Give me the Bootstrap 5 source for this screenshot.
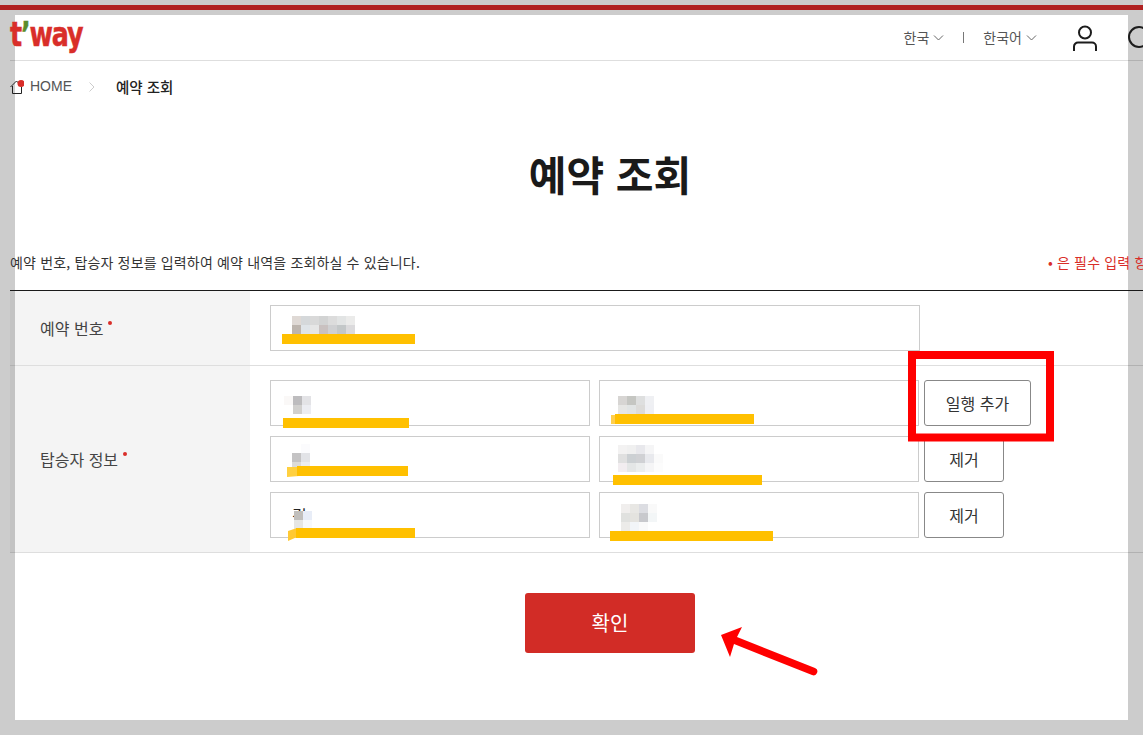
<!DOCTYPE html>
<html lang="ko">
  <head>
    <meta charset="UTF-8" />
    <meta name="viewport" content="width=device-width, initial-scale=1" />
    <title>예약 조회</title>
    <link href="https://cdn.jsdelivr.net/npm/bootstrap@5.3.3/dist/css/bootstrap.min.css" rel="stylesheet" />
    <style>
      html, body { height: 735px; overflow: hidden; }
      body {
        background-color: #cccccc;
        font-family: "Noto Sans CJK KR", "Liberation Sans", sans-serif;
        color: #222;
      }
      .top-rule { height: 5px; margin-top: 5px; background-color: #b02222; }
      .sheet { height: 705px; margin: 5px 15px 0; background-color: #fff; }
      .sheet-inner { width: 1200px; margin-left: -5px; }

      /* header */
      .site-head { height: 46px; width: 1143px; border-bottom: 1px solid rgba(0, 0, 0, .13); }
      .logo-text {
        font-family: "DejaVu Sans", sans-serif; font-weight: 700; font-size: 33px;
        letter-spacing: -1.5px; color: #d92e29; line-height: 1; margin-top: -6px;
        transform: scaleX(.77); transform-origin: left center;
        -webkit-text-stroke: .5px #d92e29;
      }
      .logo-text span { color: #5b8c2a; -webkit-text-stroke: .5px #5b8c2a; }
      .lang-item { font-size: 14px; color: #555; }
      .lang-sep { width: 1px; height: 11px; background-color: #777; margin: 0 19px; }
      .user-ico { margin-left: 36px; margin-right: 30px; }

      /* breadcrumb */
      .crumbs { height: 51px; font-size: 14px; }
      .crumb-home { color: #555; font-family: "Liberation Sans", sans-serif; margin-left: 6px; }
      .crumb-now { font-weight: 500; font-size: 14.5px; color: #222; }
      .crumb-gap { margin: 0 21px 0 17px; }

      .page-title { font-size: 41px; font-weight: 700; color: #1a1a1a; line-height: 56px; margin: 33px 0 0; }
      .intro { height: 38px; margin-top: 51px; font-size: 14px; letter-spacing: .16px; color: #333; }
      .intro-text { width: 1038px; }
      .intro-req { color: #d92e29; white-space: nowrap; }

      /* form table */
      .form-tbl { border-top: 1px solid #1a1a1a; }
      .form-line { border-bottom: 1px solid rgba(0, 0, 0, .13); }
      .form-key {
        width: 240px; padding-left: 30px; font-size: 16px; color: #444;
        background-color: rgba(0, 0, 0, .045);
      }
      .req-dot {
        width: 4px; height: 4px; border-radius: 50%; background-color: #d92e29;
        margin-left: 5px; margin-top: -10px;
      }
      .form-val { padding: 14px 0 14px 20px; row-gap: 10px; }
      .pax-line { gap: 9px; }
      .field-one { width: 650px; }
      .field-half { width: 320px; }
      .form-control.field-box {
        height: 46px; border: 1px solid #ccc; border-radius: 0; font-size: 16px;
        padding: 0 21px; color: #222; box-shadow: none;
      }
      .btn.line-btn {
        height: 46px; margin-left: -4px; padding: 0; border: 1px solid #888; border-radius: 3px;
        font-size: 16px; color: #333; background-color: #fff;
      }
      .line-btn-add { width: 107px; }
      .line-btn-del { width: 80px; }

      .btn.ok-btn {
        width: 170px; height: 60px; margin-top: 40px; padding: 0; border: 0; border-radius: 3px;
        background-color: #d22c26; color: #fff; font-size: 20px;
      }

      .marks { position: absolute; top: 0; left: 0; pointer-events: none; }
    </style>
  </head>
  <body>
    <div class="top-rule"></div>
    <div class="sheet">
      <div class="sheet-inner">

        <!-- Header -->
        <div class="site-head d-flex align-items-center justify-content-between">
          <div class="logo-text">t<span>’</span>way</div>
          <div class="d-flex align-items-center">
            <span class="lang-item d-flex align-items-center gap-1">한국
              <svg width="11" height="6" viewBox="0 0 11 6"><path d="M1 .5l4.500 4.500L10 .5" fill="none" stroke="#666" /></svg>
            </span>
            <span class="lang-sep"></span>
            <span class="lang-item d-flex align-items-center gap-1">한국어
              <svg width="11" height="6" viewBox="0 0 11 6"><path d="M1 .5l4.500 4.500L10 .5" fill="none" stroke="#666" /></svg>
            </span>
            <svg class="user-ico" width="24" height="26" viewBox="0 0 24 26">
              <circle cx="12" cy="7.500" r="6" fill="none" stroke="#1c1c1c" stroke-width="2" />
              <path d="M1 26v-4.500a4 4 0 0 1 4-4h14a4 4 0 0 1 4 4V26" fill="none" stroke="#1c1c1c" stroke-width="2" />
            </svg>
            <svg width="26" height="26" viewBox="0 0 26 26">
              <circle cx="12" cy="12" r="10" fill="none" stroke="#1c1c1c" stroke-width="2" />
              <path d="M19 19l6 6" stroke="#1c1c1c" stroke-width="2" />
            </svg>
          </div>
        </div>

        <!-- Breadcrumb -->
        <div class="crumbs d-flex align-items-center">
          <svg width="14" height="14" viewBox="0 0 14 14">
            <path d="M.5 7L6.500 1l4 4M2.500 6v7.500h9V7" fill="none" stroke="#222" />
            <circle cx="11" cy="3.500" r="3.500" fill="#d92e29" />
          </svg>
          <span class="crumb-home">HOME</span>
          <svg class="crumb-gap" width="6" height="10" viewBox="0 0 6 10"><path d="M.5.5L5 5 .5 9.500" fill="none" stroke="#ccc" /></svg>
          <span class="crumb-now">예약 조회</span>
        </div>

        <h1 class="page-title text-center">예약 조회</h1>

        <div class="intro d-flex align-items-start">
          <span class="intro-text">예약 번호, 탑승자 정보를 입력하여 예약 내역을 조회하실 수 있습니다.</span>
          <span class="intro-req">• 은 필수 입력 항목입니다.</span>
        </div>

        <!-- Form -->
        <div class="form-tbl">
          <div class="form-line d-flex">
            <div class="form-key d-flex align-items-center">예약 번호<i class="req-dot"></i></div>
            <div class="form-val">
              <input class="form-control field-box field-one" type="text" aria-label="예약 번호" />
            </div>
          </div>
          <div class="form-line d-flex">
            <div class="form-key d-flex align-items-center">탑승자 정보<i class="req-dot"></i></div>
            <div class="form-val d-flex flex-column">
              <div class="pax-line d-flex">
                <input class="form-control field-box field-half" type="text" aria-label="성" />
                <input class="form-control field-box field-half" type="text" aria-label="이름" />
                <button class="btn line-btn line-btn-add" type="button">일행 추가</button>
              </div>
              <div class="pax-line d-flex">
                <input class="form-control field-box field-half" type="text" aria-label="성" />
                <input class="form-control field-box field-half" type="text" aria-label="이름" />
                <button class="btn line-btn line-btn-del" type="button">제거</button>
              </div>
              <div class="pax-line d-flex">
                <input class="form-control field-box field-half" type="text" aria-label="성" value="김" />
                <input class="form-control field-box field-half" type="text" aria-label="이름" />
                <button class="btn line-btn line-btn-del" type="button">제거</button>
              </div>
            </div>
          </div>
        </div>

        <div class="text-center">
          <button class="btn ok-btn" type="button">확인</button>
        </div>
      </div>
    </div>

    <!-- Annotations drawn over the screenshot -->
    <svg id="marks" class="marks" width="1143" height="735" viewBox="0 0 1143 735">
      <rect x="282" y="334" width="133" height="10" fill="#ffc000" />
      <rect x="283" y="418" width="126" height="10" fill="#ffc000" />
      <path d="M287 467h12v9l-12 1z" fill="#ffd040" />
      <rect x="297" y="466" width="111" height="10" fill="#ffc000" />
      <path d="M288 531l9-3v9l-9 4z" fill="#ffc933" />
      <rect x="296" y="528" width="119" height="10" fill="#ffc000" />
      <path d="M611 415h5v9h-5z" fill="#ffcf4d" />
      <rect x="615" y="414" width="139" height="10" fill="#ffc000" />
      <rect x="613" y="475" width="149" height="10" fill="#ffc000" />
      <rect x="610" y="531" width="163" height="10" fill="#ffc000" />
      <rect x="912" y="355" width="138" height="82.500" fill="none" stroke="#f00" stroke-width="8" />
      <path d="M721 635l21-8-5 10 78 31a3.500 3.500 0 0 1-3 7l-78-31-4 13z" fill="#f00" />
    </svg>

    <script>
      // pixelated patches that hide the names: [x, y, rows of colours]
      const patches = [
        [292, 316, ["dfd9d5 d5d8da d9d9d9 d2d3d3 dcdcdc e2e4e4 ebebea", "bdb5ae dfe4e8 e6e6e6 c9c1c0 cfd0d2 c3c7c8 dbdadc"]],
        [284, 396, ["faf8f7 bdbcbe e3e3e6", "ffffff d1d0ce ecedf2"]],
        [292, 444, ["ffffff fbfbfd", "c4c3c4 e2e3e7", "dcdbd9 ecedf0"]],
        [294, 511, ["c1bfbc e8edf7", "e6e6e4 f7f9fc"]],
        [618, 396, ["d7d5d3 c5c6c2 dedfdf eff0f3", "e6e6e4 e1e4e4 dcdbd9 eeeff3"]],
        [618, 445, ["f3f2f2 f0f0f0 e8e8ec f5f5f6", "e0e0e0 ccd0d3 d0d1d4 e8e9ed fafafa", "f2edf0 e4e6e6 ebeded f5f5f6 fcfcfc"]],
        [621, 504, ["f0eeed e8e7e4 dcdde2 f9f9f9", "e0e1df e4e3df c8c9cd f3f6f7", "ecebe9 f2f5f8 fafafa"]]
      ];
      const marks = document.getElementById("marks");
      const firstYellow = marks.firstElementChild;
      patches.forEach(([x, y, rows]) => {
        rows.forEach((row, r) => {
          row.split(" ").forEach((hex, c) => {
            const px = document.createElementNS("http://www.w3.org/2000/svg", "rect");
            px.setAttribute("x", x + c * 9);
            px.setAttribute("y", y + r * 9);
            px.setAttribute("width", 9);
            px.setAttribute("height", 9);
            px.setAttribute("fill", "#" + hex);
            marks.insertBefore(px, firstYellow);
          });
        });
      });
    </script>
    <script src="https://cdn.jsdelivr.net/npm/bootstrap@5.3.3/dist/js/bootstrap.bundle.min.js"></script>
  </body>
</html>
